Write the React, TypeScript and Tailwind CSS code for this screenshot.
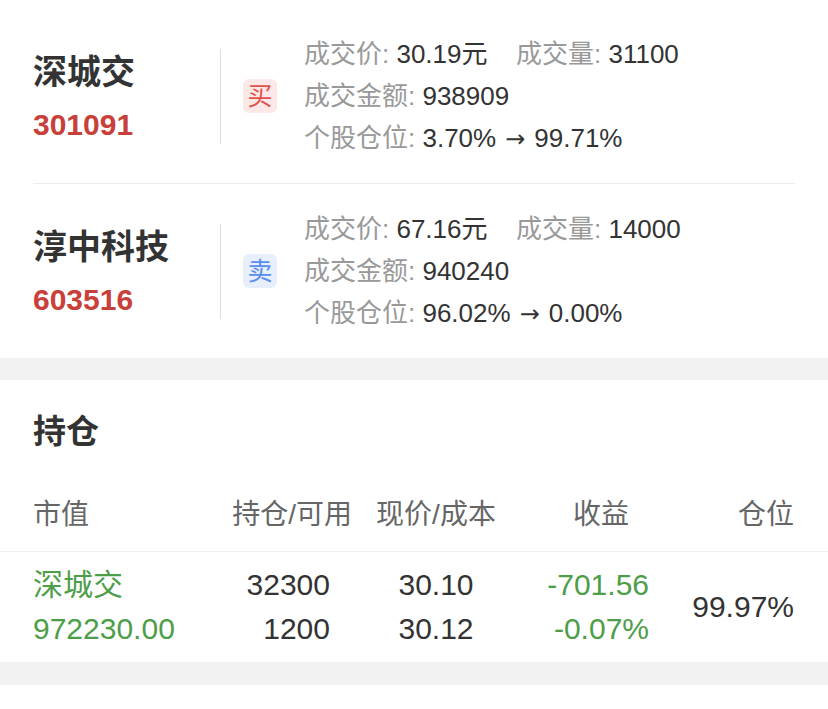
type Trade = {
  name: string
  code: string
  side: 'buy' | 'sell'
  price: string
  volume: string
  amount: string
  from: string
  to: string
}

const TRADES: Trade[] = [
  { name: '深城交', code: '301091', side: 'buy', price: '30.19元', volume: '31100', amount: '938909', from: '3.70%', to: '99.71%' },
  { name: '淳中科技', code: '603516', side: 'sell', price: '67.16元', volume: '14000', amount: '940240', from: '96.02%', to: '0.00%' },
]

function TradeRow({ t, last }: { t: Trade; last: boolean }) {
  const buy = t.side === 'buy'
  return (
    <div className={'flex items-center py-6 ' + (last ? '' : 'border-b border-[#ececec]')}>
      {/* name + code */}
      <div className="w-[187px] flex flex-col pt-[5px]">
        <div className="h-[44px] text-[34px] leading-[44px] font-bold text-[#333]">{t.name}</div>
        <div className="mt-[9px] h-[44px] text-[30px] leading-[44px] font-bold text-[#c8403a]">{t.code}</div>
      </div>
      <div className="w-px h-[95px] bg-[#dcdcdc]" />
      <div className="ml-[22px] w-[34px] h-[34px] rounded-md flex items-center justify-center text-[25px] leading-none"
        style={{ background: buy ? '#fde8e8' : '#e7effd', color: buy ? '#e0524b' : '#5a8ef0' }}>
        {buy ? '买' : '卖'}
      </div>
      {/* details */}
      <div className="ml-[27px] flex flex-col text-[26px] leading-[42px] text-[#999]">
        <div className="flex h-[42px]">
          <span className="w-[212px]">成交价: <span className="text-[#333]">{t.price}</span></span>
          <span>成交量: <span className="text-[#333]">{t.volume}</span></span>
        </div>
        <div className="h-[42px]">成交金额: <span className="text-[#333]">{t.amount}</span></div>
        <div className="h-[42px]">
          个股仓位: <span className="text-[#333]">{t.from}<span className="inline-block mx-[9px] font-['DejaVu_Sans'] text-[24px]">→</span>{t.to}</span>
        </div>
      </div>
    </div>
  )
}

export default function App() {
  return (
    <div className="w-[828px] h-[709px] bg-white font-['Liberation_Sans','Noto_Sans_CJK_SC',sans-serif] overflow-hidden">
      {/* trade records */}
      <div className="pt-[9px] px-[33px]">
        {TRADES.map((t, i) => (
          <TradeRow key={t.code} t={t} last={i === TRADES.length - 1} />
        ))}
      </div>

      <div className="h-[22px] bg-[#f2f2f2]" />

      {/* holdings */}
      <div className="h-[74px] px-[33px] pt-[30px] text-[33px] leading-[44px] font-semibold text-[#333]">持仓</div>

      <div className="flex h-[97px] pl-[33px] pr-[34px] pt-[44px] text-[28px] leading-[34px] text-[#666]">
        <div className="w-[187px]">市值</div>
        <div className="w-[132px] text-right">持仓/可用</div>
        <div className="ml-[23px] w-[122px] text-center">现价/成本</div>
        <div className="w-[152px] text-right pr-[20px]">收益</div>
        <div className="flex-1 text-right">仓位</div>
      </div>
      <div className="h-px bg-[#eeeeee]" />

      <div className="flex items-center h-[110px] pl-[33px] pr-[34px] pb-[1px] text-[30px] leading-[44px] text-[#333]">
        <div className="w-[187px] text-[#4d9e48]">
          <div className="h-[44px]">深城交</div>
          <div className="h-[44px]">972230.00</div>
        </div>
        <div className="w-[132px] text-right pr-[22px]">
          <div className="h-[44px]">32300</div>
          <div className="h-[44px]">1200</div>
        </div>
        <div className="ml-[23px] w-[122px] text-center">
          <div className="h-[44px]">30.10</div>
          <div className="h-[44px]">30.12</div>
        </div>
        <div className="w-[152px] text-right text-[#4d9e48]">
          <div className="h-[44px]">-701.56</div>
          <div className="h-[44px]">-0.07%</div>
        </div>
        <div className="flex-1 text-right">99.97%</div>
      </div>

      <div className="h-[23px] bg-[#f2f2f2]" />
    </div>
  )
}
